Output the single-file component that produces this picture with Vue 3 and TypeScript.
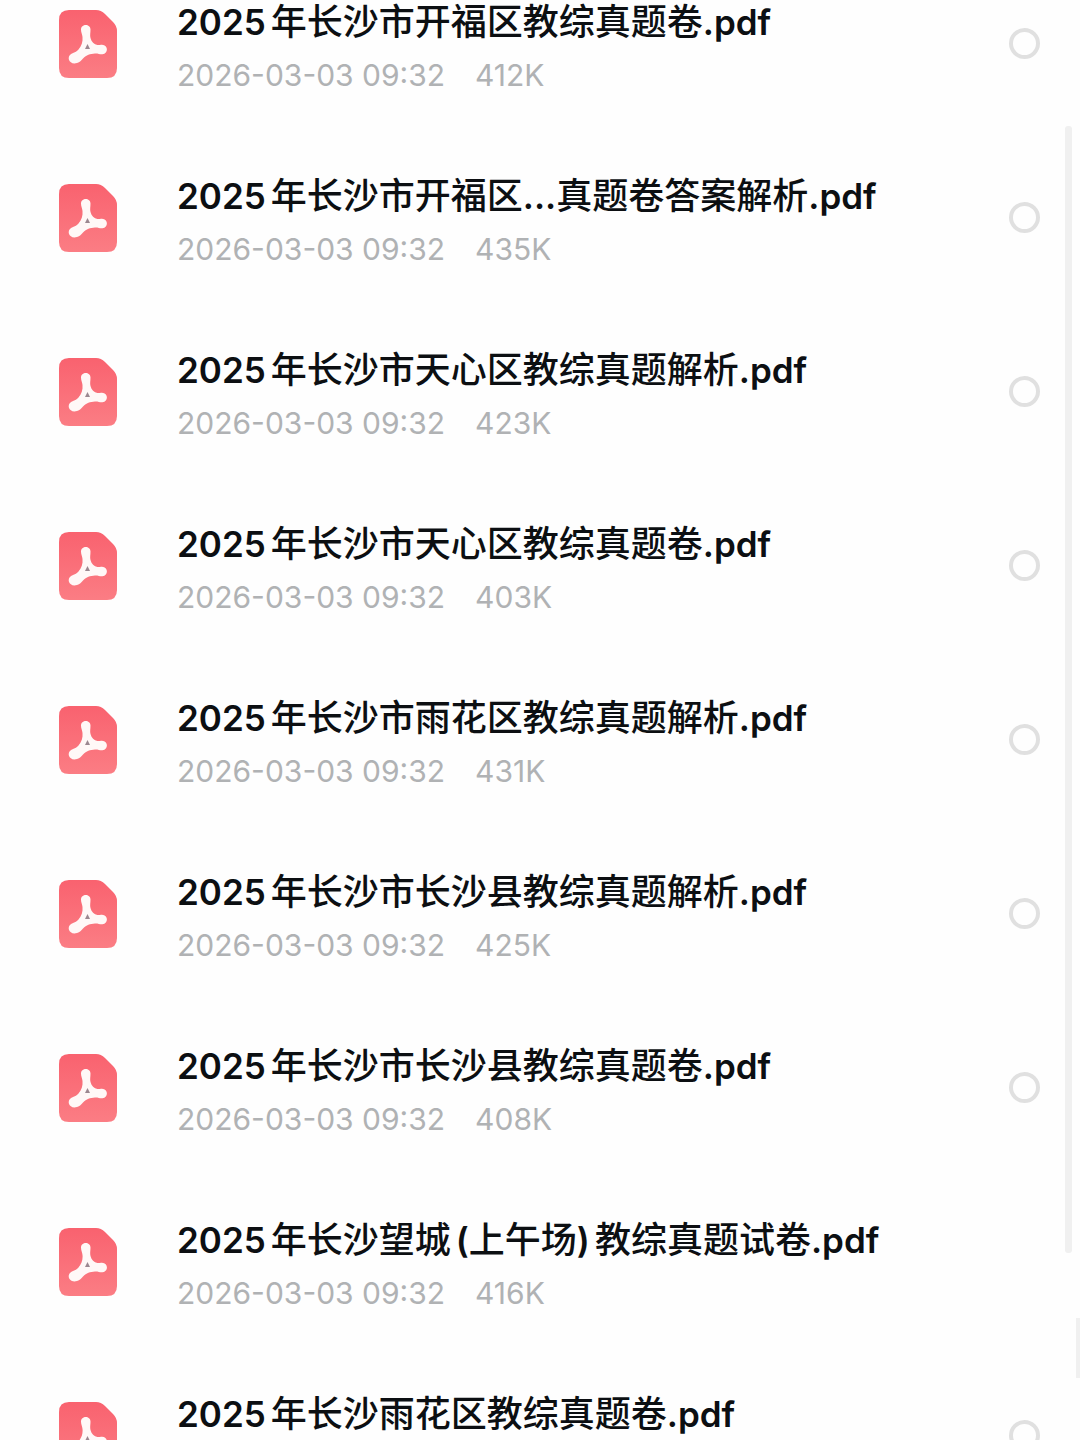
<script setup lang="ts">
interface FileItem {
  name: string
  date?: string
  size?: string
  selectable: boolean
}

interface Part {
  text: string
  latin: boolean
  before: boolean
  after: boolean
}

const date = '2026-03-03 09:32'

const files: FileItem[] = [
  { name: '2025年长沙市开福区教综真题卷.pdf', date, size: '412K', selectable: true },
  { name: '2025年长沙市开福区...真题卷答案解析.pdf', date, size: '435K', selectable: true },
  { name: '2025年长沙市天心区教综真题解析.pdf', date, size: '423K', selectable: true },
  { name: '2025年长沙市天心区教综真题卷.pdf', date, size: '403K', selectable: true },
  { name: '2025年长沙市雨花区教综真题解析.pdf', date, size: '431K', selectable: true },
  { name: '2025年长沙市长沙县教综真题解析.pdf', date, size: '425K', selectable: true },
  { name: '2025年长沙市长沙县教综真题卷.pdf', date, size: '408K', selectable: true },
  { name: '2025年长沙望城(上午场)教综真题试卷.pdf', date, size: '416K', selectable: false },
  { name: '2025年长沙雨花区教综真题卷.pdf', selectable: true },
]

// Latin runs are set one weight heavier than the Chinese ones, with a small
// space where a number or a bracket meets Chinese text.
function split(name: string): Part[] {
  return (name.match(/[\x20-\x7e]+|[^\x20-\x7e]+/g) ?? []).map((text) => ({
    text,
    latin: /^[\x20-\x7e]/.test(text),
    before: text.startsWith('('),
    after: /^[\d)]+$/.test(text),
  }))
}
</script>

<template>
  <main class="page">
    <ul class="list">
      <li v-for="(file, i) in files" :key="file.name" class="row">
        <svg class="icon" viewBox="0 0 58 68" aria-hidden="true">
          <defs>
            <linearGradient :id="`sheet-${i}`" x1="0" y1="0" x2="0" y2="1">
              <stop offset="0" stop-color="#f9626f" />
              <stop offset="1" stop-color="#fb7d84" />
            </linearGradient>
          </defs>
          <path
            :fill="`url(#sheet-${i})`"
            d="M10 0H37Q42 0 46 4L54 12Q58 16 58 21V58Q58 68 48 68H10Q0 68 0 58V10Q0 0 10 0Z"
          />
          <path
            fill="#fff8f7"
            d="M22 19.500C22 13.500 31.500 13.500 31.500 19.500C31.500 23 30.800 25 31.500 28C32.500 32 35 34.500 38.500 35C40 35.200 41 34.700 43 34.700C49.500 35 49.500 43.500 43.500 44.200C41 44.500 39 43.300 36 43.500C31 43.800 27.500 45 24 48.500C22 50.500 21 52 18 53C11 55.500 6.500 47.500 12.500 43.800C15.500 42 17.500 42 19.500 39.500C22.500 36 24 32 23.500 27C23.200 24 22 22.500 22 19.500Z"
          />
          <path fill="#9b8790" d="M28.500 34L31 39H26Z" />
        </svg>
        <label class="info" :for="file.selectable ? `file-${i}` : undefined">
          <span class="name">
            <span
              v-for="(part, p) in split(file.name)"
              :key="p"
              :class="{ latin: part.latin, before: part.before, after: part.after }"
            >{{ part.text }}</span>
          </span>
          <span v-if="file.date" class="meta">
            <span>{{ file.date }}</span>
            <span>{{ file.size }}</span>
          </span>
        </label>
        <input v-if="file.selectable" :id="`file-${i}`" class="check" type="checkbox" />
      </li>
    </ul>
    <div class="scrollbar"></div>
    <div class="handle"></div>
  </main>
</template>

<style>
body {
  margin: 0;
  background: #fefefe;
}
</style>

<style scoped>
.page {
  position: relative;
  height: 100vh;
  overflow: hidden;
  font-family: Inter, 'Noto Sans CJK SC', sans-serif;
}

.list {
  display: flex;
  flex-direction: column;
  gap: 78px;
  margin: 0;
  padding: 0 40px 0 59px;
  list-style: none;
}

.row {
  display: flex;
  align-items: flex-start;
}

.icon {
  flex: none;
  width: 58px;
  height: 68px;
  margin: 10px 60px 0 0;
}

.info {
  display: flex;
  flex: 1;
  flex-direction: column;
  gap: 10px;
  min-width: 0;
}

.name {
  color: #0c0f12;
  font-size: 36px;
  font-weight: 500;
  line-height: 44px;
  white-space: nowrap;
}

.latin {
  font-size: 35px;
  font-weight: 600;
}

.before {
  margin-left: 5px;
}

.after {
  margin-right: 5px;
}

.meta {
  display: flex;
  gap: 30px;
  color: #b0b2b4;
  font-size: 30px;
  line-height: 42px;
  white-space: nowrap;
}

.check {
  flex: none;
  box-sizing: border-box;
  width: 31px;
  height: 31px;
  margin: 28px 0 0;
  border: 4px solid #e0e0e0;
  border-radius: 50%;
  background: transparent;
  appearance: none;
}

.check:checked {
  border-color: #fa6671;
  background: #fa6671;
}

.scrollbar {
  position: absolute;
  top: 126px;
  right: 8px;
  bottom: 187px;
  width: 7px;
  border-radius: 3px;
  background: #f0f0f0;
}

.handle {
  position: absolute;
  right: 0;
  bottom: 62px;
  width: 4px;
  height: 60px;
  background: #f0f0f0;
}
</style>
